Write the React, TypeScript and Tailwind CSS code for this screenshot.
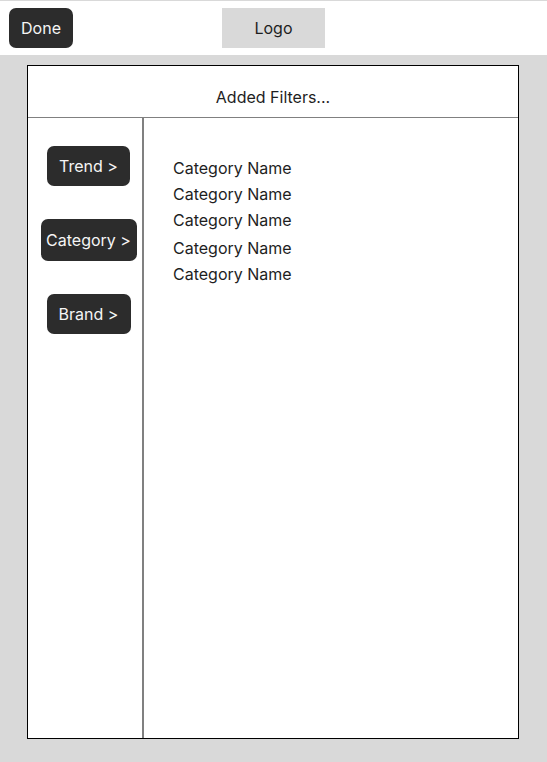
import React from "react";

export default function App() {
  const names = [
    { label: "Category Name", mt: "mt-0" },
    { label: "Category Name", mt: "mt-0" },
    { label: "Category Name", mt: "mt-0" },
    { label: "Category Name", mt: "mt-[2px]" },
    { label: "Category Name", mt: "mt-0" },
  ];
  return (
    <div
      className="w-[547px] h-[762px] bg-[#d9d9d9] flex flex-col overflow-hidden"
      style={{ fontFamily: "Inter, 'Noto Sans', sans-serif" }}
    >
      <div className="mt-px h-[54px] bg-white flex items-start shrink-0">
        <button className="ml-[9px] mt-[7px] w-[64px] h-[40px] rounded-[7px] bg-[#2c2c2c] text-[#f5f5f5] text-[16px] flex items-center justify-center">
          Done
        </button>
        <div className="ml-[149px] mt-[7px] w-[103px] h-[40px] bg-[#d9d9d9] text-[#1e1e1e] text-[16px] flex items-center justify-center">
          Logo
        </div>
      </div>

      <div className="ml-[27px] mt-[10px] w-[492px] h-[674px] border border-black bg-white flex flex-col">
        <div className="h-[52px] border-b border-[#808080] flex justify-center pt-[22px] text-[16px] leading-[19px] text-[#1e1e1e] shrink-0">
          Added Filters...
        </div>
        <div className="flex flex-1">
          <div className="w-[116px] border-r-2 border-[#808080] flex flex-col items-center pl-[7px] pt-[28px] gap-[33px]">
            <button className="w-[83px] h-[40px] rounded-[7px] bg-[#2c2c2c] text-[#f5f5f5] text-[16px] flex items-center justify-center">
              Trend &gt;
            </button>
            <button className="w-[96px] h-[42px] rounded-[7px] bg-[#2c2c2c] text-[#f5f5f5] text-[16px] flex items-center justify-center">
              Category &gt;
            </button>
            <button className="w-[84px] h-[40px] rounded-[7px] bg-[#2c2c2c] text-[#f5f5f5] text-[16px] flex items-center justify-center">
              Brand &gt;
            </button>
          </div>
          <div className="flex-1 flex flex-col pl-[29px] pt-[37px]">
            {names.map((n, i) => (
              <div key={i} className={`${n.mt} text-[16px] leading-[26px] text-[#1e1e1e]`}>
                {n.label}
              </div>
            ))}
          </div>
        </div>
      </div>
    </div>
  );
}
